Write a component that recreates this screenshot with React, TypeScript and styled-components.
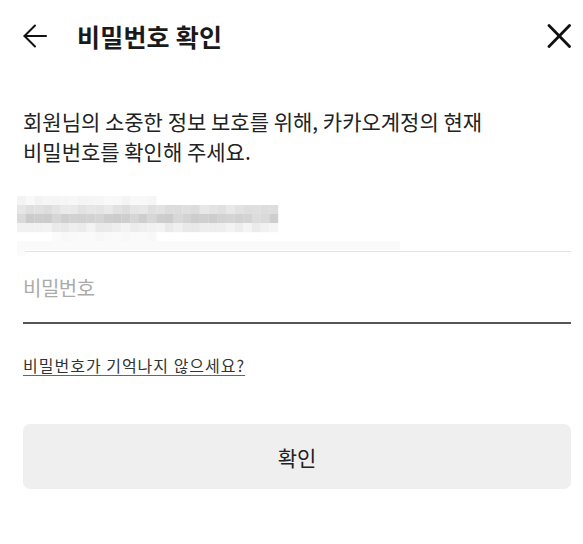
import React from 'react';
import styled, { createGlobalStyle } from 'styled-components';

const GlobalStyle = createGlobalStyle`
  html, body {
    margin: 0;
    padding: 0;
    background: #fff;
  }
  body {
    font-family: "Noto Sans CJK KR", "Noto Sans", sans-serif;
    color: #1e1e1e;
  }
`;

const Page = styled.div`
  width: 583px;
  height: 544px;
  box-sizing: border-box;
  padding: 0 12px 0 23px;
  display: flex;
  flex-direction: column;
`;

const Header = styled.header`
  height: 72px;
  display: flex;
  align-items: center;
`;

const IconButton = styled.button`
  border: 0;
  background: none;
  padding: 0;
  display: flex;
  align-items: center;
  justify-content: center;
  color: #111;
  cursor: pointer;
`;

const Title = styled.h1`
  flex: 1;
  margin: 0 0 0 30px;
  font-size: 25px;
  font-weight: 700;
  letter-spacing: 0.2px;
  color: #1a1a1a;
`;

const Description = styled.p`
  margin: 34px 0 0;
  font-size: 21px;
  line-height: 30px;
  color: #222;
`;

const Field = styled.div<{ $strong?: boolean }>`
  position: relative;
  height: ${p => (p.$strong ? '70px' : '85px')};
  display: flex;
  align-items: center;
  border-bottom: ${p => (p.$strong ? '2px solid #555' : '1px solid #e3e3e3')};
`;

const Input = styled.input`
  width: 100%;
  border: 0;
  outline: none;
  padding: 0;
  background: transparent;
  font-family: inherit;
  font-size: 20px;
  letter-spacing: -0.5px;
  color: #222;

  &::placeholder {
    color: #ababab;
  }
`;

// the pixelated e-mail address, laid over the first field
const Mosaic = styled.svg`
  position: absolute;
  left: -6px;
  top: 30px;
`;

const HelpLink = styled.a`
  align-self: flex-start;
  margin-top: 29px;
  font-size: 16px;
  letter-spacing: 1px;
  color: #333;
  text-decoration: underline;
  text-decoration-color: #666;
  text-underline-offset: 3px;
`;

const SubmitButton = styled.button`
  margin-top: 47px;
  height: 65px;
  border: 0;
  border-radius: 7px;
  background: #efefef;
  font-family: inherit;
  font-size: 21px;
  color: #222;
`;

const cols = 30;
const cell = 8.7;
const rowShades: [number, number, number, number][] = [
  // [from col, to col, base grey, spread]
  [0, 16, 246, 6],
  [0, 30, 226, 16],
  [0, 30, 212, 18],
  [0, 30, 238, 12],
  [4, 16, 249, 4],
];

const seed = (i: number) => {
  const x = Math.sin(i * 12.9898) * 43758.5453;
  return x - Math.floor(x);
};

const EmailMosaic = () => (
  <Mosaic width="390" height="64" viewBox="0 0 390 64">
    {rowShades.map(([from, to, base, spread], r) =>
      Array.from({ length: cols }).map((_, c) => {
        if (c < from || c >= to) return null;
        const g = Math.round(base + (seed(r * 31 + c) - 0.5) * spread);
        return (
          <rect
            key={`${r}-${c}`}
            x={c * cell}
            y={r * 9}
            width={cell + 0.2}
            height={9.2}
            fill={`rgb(${g},${g},${g})`}
          />
        );
      })
    )}
    <rect x="0" y="45" width="383" height="9" fill="#fafafa" />
    <rect x="0" y="54" width="8" height="6" fill="#fbfbfb" />
  </Mosaic>
);

const App: React.FC = () => {
  return (
    <Page>
      <GlobalStyle />
      <Header>
        <IconButton aria-label="뒤로">
          <svg width="24" height="24" viewBox="0 0 24 24" fill="none" stroke="currentColor" strokeWidth="2" strokeLinecap="round" strokeLinejoin="round">
            <path d="M23 12H1.5" />
            <path d="M12 1.5L1.5 12L12 22.5" />
          </svg>
        </IconButton>
        <Title>비밀번호 확인</Title>
        <IconButton aria-label="닫기">
          <svg width="24" height="24" viewBox="0 0 24 24" fill="none" stroke="currentColor" strokeWidth="2.8" strokeLinecap="round">
            <path d="M2 1.5L22.5 22.5" />
            <path d="M22.5 1.5L2 22.5" />
          </svg>
        </IconButton>
      </Header>

      <Description>
        회원님의 소중한 정보 보호를 위해, 카카오계정의 현재
        <br />
        비밀번호를 확인해 주세요.
      </Description>

      <Field>
        <EmailMosaic />
      </Field>

      <Field $strong>
        <Input type="password" placeholder="비밀번호" />
      </Field>

      <HelpLink href="#">비밀번호가 기억나지 않으세요?</HelpLink>

      <SubmitButton>확인</SubmitButton>
    </Page>
  );
};

export default App;
